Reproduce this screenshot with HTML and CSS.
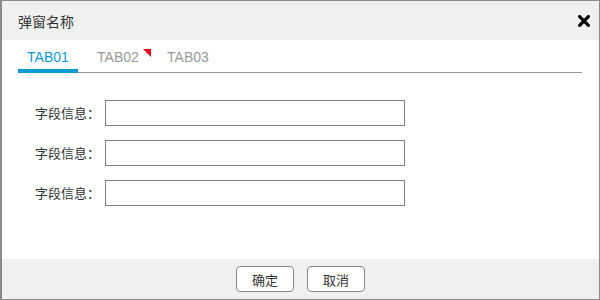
FILE: index.html
```html
<!DOCTYPE html>
<html lang="zh">
<head>
<meta charset="utf-8">
<title>弹窗</title>
<link rel="stylesheet" href="styles.css">
</head>
<body>
<div class="dialog">
  <div class="dialog-header">
    <span class="dialog-title">弹窗名称</span>
    <span class="dialog-close" aria-label="关闭">
      <svg width="12" height="12" viewBox="0 0 12 12"><path d="M1.6 1.6 L10.4 10.4 M10.4 1.6 L1.6 10.4" stroke="#000" stroke-width="3.2" stroke-linecap="square" fill="none"/></svg>
    </span>
  </div>
  <div class="tabs">
    <div class="tab active">TAB01</div>
    <div class="tab flagged">TAB02</div>
    <div class="tab">TAB03</div>
  </div>
  <div class="form">
    <label class="field-label">字段信息：</label><input class="field-input" type="text">
    <label class="field-label">字段信息：</label><input class="field-input" type="text">
    <label class="field-label">字段信息：</label><input class="field-input" type="text">
  </div>
  <div class="dialog-footer">
    <button class="btn">确定</button>
    <button class="btn">取消</button>
  </div>
</div>
</body>
</html>
```
FILE: styles.css
```css
html, body {
  margin: 0;
  padding: 0;
  background: #fff;
}
.dialog {
  width: 600px;
  height: 300px;
  box-sizing: border-box;
  border: 1px solid #8a8a8a;
  border-left-width: 2px;
  display: flex;
  flex-direction: column;
  font-family: "Liberation Sans", "Noto Sans CJK SC", sans-serif;
  color: #333;
  background: #fff;
}
.dialog-header {
  height: 39px;
  flex: none;
  background: #f0f0f0;
  display: flex;
  align-items: center;
  justify-content: space-between;
  padding: 0 9px 0 16px;
}
.dialog-title {
  font-family: "Noto Sans CJK SC", sans-serif;
  font-size: 14px;
  line-height: 20px;
  color: #333;
}
.dialog-close {
  width: 12px;
  height: 12px;
  display: block;
  margin-top: 1px;
}
.dialog-close svg { display: block; }
.tabs {
  flex: none;
  display: flex;
  height: 32px;
  margin: 0 17px 0 16px;
  border-bottom: 1px solid #999;
}
.tab {
  position: relative;
  box-sizing: border-box;
  width: 60px;
  height: 33px;
  margin-right: 10px;
  padding-top: 9px;
  font-size: 14px;
  line-height: 17px;
  text-align: center;
  color: #999;
}
.tab.active {
  color: #0a9ad8;
  border-bottom: 4px solid #0a9ad8;
}
.tab.flagged::after {
  content: "";
  position: absolute;
  right: -3px;
  top: 9px;
  width: 0;
  height: 0;
  border-top: 8px solid #e8001c;
  border-left: 8px solid transparent;
}
.form {
  flex: 1;
  display: grid;
  grid-template-columns: 65px 300px;
  grid-auto-rows: 26px;
  column-gap: 5px;
  row-gap: 14px;
  align-content: start;
  padding: 27px 0 0 33px;
}
.field-label {
  font-family: "Noto Sans CJK SC", sans-serif;
  font-size: 13px;
  line-height: 26px;
  text-align: right;
  color: #333;
  white-space: nowrap;
}
.field-input {
  box-sizing: border-box;
  width: 300px;
  height: 26px;
  margin: 0;
  border: 1px solid #808080;
  border-radius: 0;
  background: #fff;
  outline: none;
  padding: 0 4px;
}
.dialog-footer {
  flex: none;
  height: 40px;
  background: #f0f0f0;
  display: flex;
  align-items: center;
  justify-content: center;
  gap: 13px;
}
.btn {
  box-sizing: border-box;
  width: 58px;
  height: 26px;
  margin: 0;
  padding: 0;
  border: 1px solid #888;
  border-radius: 4px;
  background: #fff;
  font-family: "Noto Sans CJK SC", sans-serif;
  font-size: 13px;
  color: #333;
}
```
